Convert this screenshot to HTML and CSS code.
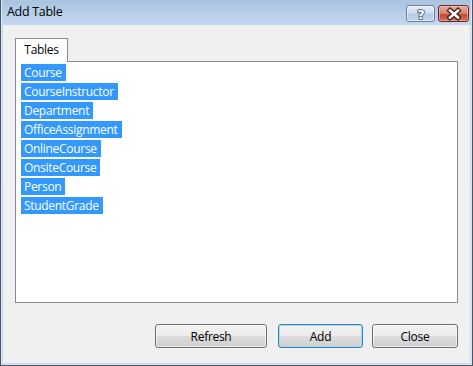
FILE: index.html
```html
<!DOCTYPE html>
<html lang="en">
<head>
    <meta charset="UTF-8">
    <title>Add Table</title>
    <link rel="stylesheet" href="styles.css">
</head>
<body>
    <div class="window">
        <div class="titlebar">
            <span class="title">Add Table</span>
            <div class="caption-buttons">
                <button class="cap-btn help">
                    <svg class="cap-icon" width="16" height="15" viewBox="0 0 16 15">
                        <text x="8" y="12.5" text-anchor="middle" class="help-glyph">?</text>
                    </svg>
                </button>
                <button class="cap-btn close">
                    <svg class="cap-icon" width="18" height="12" viewBox="0 0 18 12">
                        <path d="M5 2.5 L13 9.5 M13 2.5 L5 9.5" stroke="#3a1d18" stroke-width="5" stroke-linecap="square"/>
                        <path d="M5 2.5 L13 9.5 M13 2.5 L5 9.5" stroke="#ffffff" stroke-width="2.6" stroke-linecap="square"/>
                    </svg>
                </button>
            </div>
        </div>

        <div class="client">
            <div class="tabs">
                <div class="tab">Tables</div>
            </div>
            <div class="tab-panel">
                <ul class="table-list">
                    <li><span>Course</span></li>
                    <li><span>CourseInstructor</span></li>
                    <li><span>Department</span></li>
                    <li><span>OfficeAssignment</span></li>
                    <li><span>OnlineCourse</span></li>
                    <li><span>OnsiteCourse</span></li>
                    <li><span>Person</span></li>
                    <li><span>StudentGrade</span></li>
                </ul>
            </div>
            <div class="actions">
                <button class="btn btn-refresh">Refresh</button>
                <button class="btn btn-add">Add</button>
                <button class="btn btn-close">Close</button>
            </div>
        </div>
    </div>
</body>
</html>
```

FILE: styles.css
```css
body {
    margin: 0;
    padding: 0;
    width: 473px;
    height: 366px;
    overflow: hidden;
    font-family: "Open Sans", "Noto Sans", sans-serif;
    font-size: 12px;
    letter-spacing: -0.3px;
    background-color: #ffffff;
}

.window {
    box-sizing: border-box;
    width: 473px;
    height: 366px;
    display: flex;
    flex-direction: column;
    border: 1px solid #4a5666;
    border-top: none;
    padding: 0 2px 2px 2px;
    background: linear-gradient(#a9c3e1 0px, #c4d8ee 25px, #c8dcf1 100%);
    box-shadow: inset 1px 0 0 #d9e8f7, inset -1px 0 0 #d9e8f7, inset 0 -1px 0 #d9e8f7;
}

.titlebar {
    height: 25px;
    flex: none;
    display: flex;
    align-items: flex-start;
    justify-content: space-between;
}

.title {
    margin-left: 4px;
    margin-top: 4px;
    line-height: 16px;
    font-size: 12.5px;
    color: #000000;
}

.caption-buttons {
    display: flex;
    gap: 3px;
    margin-top: 5px;
    margin-right: 1px;
}

.cap-btn {
    box-sizing: border-box;
    height: 17px;
    padding: 0;
    border-radius: 3px;
    display: flex;
    align-items: center;
    justify-content: center;
}

.cap-icon {
    overflow: visible;
}

.help {
    width: 29px;
    border: 1px solid #6b7f9c;
    background: linear-gradient(#e4edf8 0%, #c9d9ed 50%, #b2c8e3 51%, #c4d7ee 100%);
    box-shadow: inset 0 0 0 1px rgba(255, 255, 255, 0.5);
}

.help-glyph {
    font-family: "DejaVu Sans", sans-serif;
    font-size: 13px;
    font-weight: bold;
    letter-spacing: 0;
    fill: #ffffff;
    stroke: #45546a;
    stroke-width: 1.6px;
    paint-order: stroke;
}

.close {
    width: 31px;
    border: 1px solid #6d2a22;
    background: linear-gradient(#e9a99b 0%, #d8806e 50%, #c4452f 51%, #d0705b 100%);
    box-shadow: inset 0 0 0 1px rgba(255, 220, 210, 0.45);
}

.client {
    flex: 1;
    background-color: #f0f0f0;
    padding: 13px 12px 0 12px;
    display: flex;
    flex-direction: column;
}

.tabs {
    display: flex;
    height: 23px;
}

.tab {
    box-sizing: border-box;
    width: 53px;
    height: 24px;
    border: 1px solid #898c95;
    border-bottom: none;
    background-color: #ffffff;
    text-align: center;
    line-height: 22px;
    color: #000000;
    position: relative;
    z-index: 1;
}

.tab-panel {
    box-sizing: border-box;
    height: 242px;
    border: 1px solid #898c95;
    background-color: #ffffff;
    padding: 2px 5px 1px 5px;
}

.table-list {
    list-style: none;
    margin: 0;
    padding: 0;
}

.table-list li {
    height: 17px;
    margin-bottom: 2px;
}

.table-list span {
    display: inline-block;
    height: 17px;
    line-height: 17px;
    padding: 0 4px 0 3px;
    background-color: #3399ff;
    color: #ffffff;
}

.actions {
    display: flex;
    justify-content: flex-end;
    margin-top: 21px;
}

.btn {
    box-sizing: border-box;
    height: 24px;
    padding: 0;
    border: 1px solid #707070;
    border-radius: 3px;
    background: linear-gradient(#f2f2f2 0%, #ebebeb 50%, #dddddd 51%, #cfcfcf 100%);
    box-shadow: inset 0 0 0 1px rgba(255, 255, 255, 0.6);
    font-family: inherit;
    font-size: 12px;
    letter-spacing: inherit;
    color: #000000;
}

.btn-refresh {
    width: 112px;
}

.btn-add {
    width: 85px;
    margin-left: 11px;
    border-color: #3c7fb1;
    box-shadow: inset 0 0 0 1px #9fdcf7;
}

.btn-close {
    width: 86px;
    margin-left: 9px;
}
```
